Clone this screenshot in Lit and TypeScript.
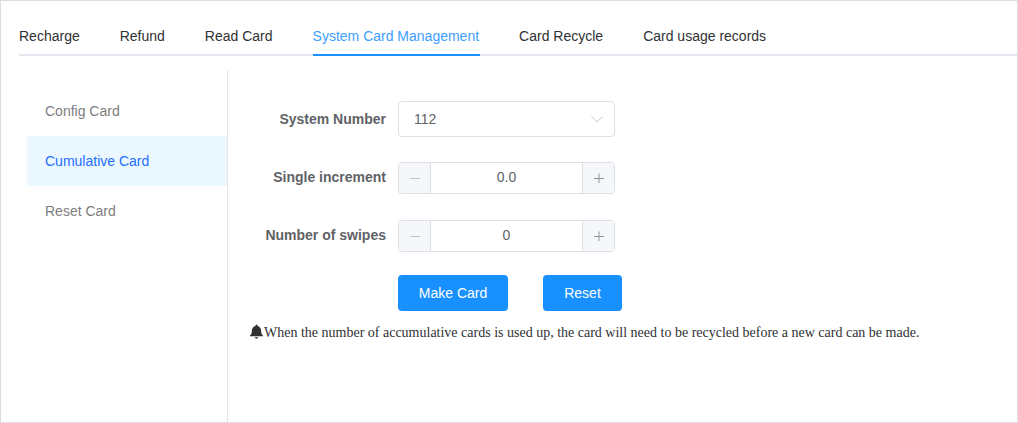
import { LitElement, html, css } from "lit";
import { customElement } from "lit/decorators.js";

@customElement("app-root")
export class AppRoot extends LitElement {
  static styles = css`
    :host { display: block; width: 1018px; height: 423px; box-sizing: border-box; border: 1px solid #ddd; background: #fff; font-family: "Liberation Sans", Arial, sans-serif; font-size: 14px; overflow: hidden; }
    .tabs { display: flex; gap: 40px; margin: 0 0 0 18px; height: 55px; box-sizing: border-box; border-bottom: 2px solid #e4e7ed; }
    .tab { height: 55px; box-sizing: border-box; line-height: 70px; color: #303133; white-space: nowrap; }
    .tab.active { color: #409eff; border-bottom: 2px solid #1890ff; padding-right: 1px; margin-right: -1px; }
    .body { display: flex; margin: 14px 0 0 26px; height: 352px; }
    .side { width: 200px; box-sizing: border-box; padding-top: 16px; flex: none; }
    .item { height: 50px; line-height: 50px; padding-left: 18px; color: #7d7d7d; }
    .item.active { background: #ecf8ff; color: #1e6fff; }
    .main { flex: 1; border-left: 1px solid #e6e6e6; padding-top: 31px; padding-left: 21px; }
    .row { display: flex; align-items: center; margin-bottom: 26px; }
    .row.first { margin-bottom: 25px; }
    .row.last { margin-bottom: 0; }
    .label { width: 149px; text-align: right; padding-right: 12px; box-sizing: border-box; font-weight: 700; color: #606266; flex: none; line-height: 32px; }
    .row.stepper .label { line-height: 30px; margin-bottom: 2px; }
    .select { width: 217px; height: 36px; box-sizing: border-box; border: 1px solid #dcdfe6; border-radius: 4px; display: flex; align-items: center; justify-content: space-between; padding: 0 10px 0 15px; color: #606266; }
    .select svg { display: block; }
    .num { width: 217px; height: 32px; box-sizing: border-box; border: 1px solid #dcdfe6; border-radius: 4px; display: flex; color: #606266; }
    .step { width: 31px; flex: none; background: #f5f7fa; display: flex; align-items: center; justify-content: center; box-sizing: content-box; padding-bottom: 1px; height: 29px; }
    .step.l { border-right: 1px solid #dcdfe6; border-radius: 3px 0 0 3px; }
    .step.r { border-left: 1px solid #dcdfe6; border-radius: 0 3px 3px 0; }
    .val { flex: 1; text-align: center; line-height: 29px; }
    .btns { display: flex; gap: 35px; margin: 23px 0 0 149px; }
    .btn { height: 36px; line-height: 36px; border-radius: 4px; background: #1890ff; color: #fff; text-align: center; }
    .btn.make { width: 110px; }
    .btn.reset { width: 79px; }
    .note { display: flex; align-items: center; margin: 13px 0 0 0; font-family: "Liberation Serif", "Times New Roman", serif; font-size: 14px; color: #303133; white-space: nowrap; height: 18px; }
    .note svg { display: block; flex: none; margin-top: -4px; }
  `;

  private step(kind: "l" | "r") {
    return html`<div class="step ${kind}">
      <svg width="10" height="10" viewBox="0 0 10 10" fill="none" stroke="${kind === "l" ? "#c0c4cc" : "#8f939a"}" stroke-width="1">
        <path d="${kind === "l" ? "M0 5.5H10" : "M0 5.5H10M5 0.5V10.5"}"></path>
      </svg>
    </div>`;
  }

  private num(value: string) {
    return html`<div class="num">${this.step("l")}<div class="val">${value}</div>${this.step("r")}</div>`;
  }

  render() {
    const tabs = ["Recharge", "Refund", "Read Card", "System Card Management", "Card Recycle", "Card usage records"];
    const items = ["Config Card", "Cumulative Card", "Reset Card"];
    return html`
      <div class="tabs">
        ${tabs.map((t) => html`<div class="tab ${t === "System Card Management" ? "active" : ""}">${t}</div>`)}
      </div>
      <div class="body">
        <div class="side">
          ${items.map((t) => html`<div class="item ${t === "Cumulative Card" ? "active" : ""}">${t}</div>`)}
        </div>
        <div class="main">
          <div class="row first">
            <div class="label">System Number</div>
            <div class="select">
              <span>112</span>
              <svg width="14" height="14" viewBox="0 0 14 14" fill="none" stroke="#c0c4cc" stroke-width="1"><path d="M1.5 4.5L7 10L12.5 4.5"></path></svg>
            </div>
          </div>
          <div class="row stepper"><div class="label">Single increment</div>${this.num("0.0")}</div>
          <div class="row stepper last"><div class="label">Number of swipes</div>${this.num("0")}</div>
          <div class="btns">
            <div class="btn make">Make Card</div>
            <div class="btn reset">Reset</div>
          </div>
          <div class="note">
            <svg width="15" height="15" viewBox="0 0 15 15" fill="#303133"><path d="M7.5 0.5a1 1 0 0 1 1 1v.4c2.2.5 3.6 2.3 3.6 4.6 0 2.8.7 4 1.9 5v.8H1v-.8c1.2-1 1.9-2.2 1.9-5 0-2.3 1.4-4.1 3.6-4.6v-.4a1 1 0 0 1 1-1z"></path><path d="M5.8 13.3h3.4a1.7 1.4 0 0 1-3.4 0z"></path></svg>
            <span>When the number of accumulative cards is used up, the card will need to be recycled before a new card can be made.</span>
          </div>
        </div>
      </div>
    `;
  }
}
